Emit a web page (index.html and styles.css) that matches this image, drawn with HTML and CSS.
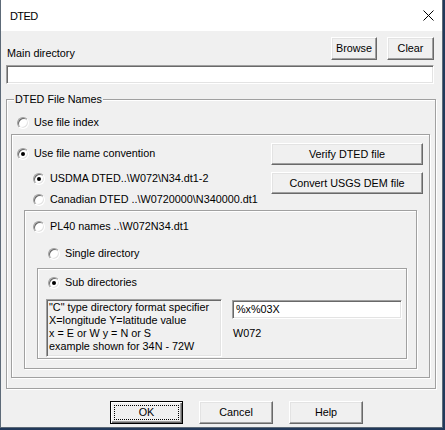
FILE: index.html
```html
<!DOCTYPE html>
<html>
<head>
<meta charset="utf-8">
<link rel="stylesheet" href="styles.css">
</head>
<body>
<div class="window">
  <div class="titlebar">
    <span class="title">DTED</span>
    <svg class="close" width="11" height="11" viewBox="0 0 11 11"><path d="M0.5 0.5 L10.5 10.5 M10.5 0.5 L0.5 10.5" stroke="#000" stroke-width="1" fill="none"/></svg>
  </div>
  <div class="client">
    <div class="toprow">
      <span class="lbl">Main directory</span>
      <div class="topbtns">
        <button class="btn b-browse">Browse</button>
        <button class="btn b-clear">Clear</button>
      </div>
    </div>
    <div class="edit main-edit"></div>

    <div class="group g0">
      <span class="legend">DTED File Names</span>
      <div class="radio-row r-index"><span class="radio"></span><span>Use file index</span></div>

      <div class="group g1">
        <div class="conv">
          <div class="conv-left">
            <div class="radio-row r-conv"><span class="radio on"></span><span>Use file name convention</span></div>
            <div class="radio-row r-usdma"><span class="radio on"></span><span>USDMA DTED..\W072\N34.dt1-2</span></div>
            <div class="radio-row r-can"><span class="radio"></span><span>Canadian DTED ..\W0720000\N340000.dt1</span></div>
          </div>
          <div class="conv-right">
            <button class="btn b-wide">Verify DTED file</button>
            <button class="btn b-wide b-convert">Convert USGS DEM file</button>
          </div>
        </div>

        <div class="group g2">
          <div class="radio-row r-pl40"><span class="radio"></span><span>PL40 names ..\W072N34.dt1</span></div>
          <div class="radio-row r-single"><span class="radio"></span><span>Single directory</span></div>

          <div class="group g3">
            <div class="radio-row r-sub"><span class="radio on"></span><span>Sub directories</span></div>
            <div class="fmt">
              <div class="static">"C" type directory format specifier<br>X=longitude Y=latitude value<br>x = E or W y = N or S<br>example shown for 34N - 72W</div>
              <div class="fmt-right">
                <div class="edit fmt-edit">%x%03X</div>
                <div class="example">W072</div>
              </div>
            </div>
          </div>
        </div>
      </div>
    </div>

    <div class="bottom">
      <button class="btn b-dlg b-ok"><span class="focus">OK</span></button>
      <button class="btn b-dlg">Cancel</button>
      <button class="btn b-dlg">Help</button>
    </div>
  </div>
</div>
</body>
</html>
```

FILE: styles.css
```css
html, body {
  margin: 0;
  padding: 0;
}
body {
  width: 445px;
  height: 430px;
  background: #22395a;
  font-family: "Liberation Sans", Arial, sans-serif;
  font-size: 10.8px;
  color: #000;
  overflow: hidden;
}
.window {
  box-sizing: border-box;
  width: 443px;
  height: 428px;
  background: #f0f0f0;
  border: 1px solid #5d6a78;
  border-top: none;
  display: flex;
  flex-direction: column;
}
.titlebar {
  height: 31px;
  background: #fff;
  display: flex;
  align-items: center;
  justify-content: space-between;
  padding: 0 8px 0 9px;
  flex-shrink: 0;
}
.title {
  font-size: 11px;
  letter-spacing: -0.6px;
}
.close {
  display: block;
}
.client {
  padding: 6px 0 0 5px;
  display: flex;
  flex-direction: column;
  align-items: flex-start;
}
.toprow {
  width: 428px;
  height: 23px;
  display: flex;
  justify-content: space-between;
  align-items: flex-end;
}
.lbl {
  line-height: 13px;
  margin-left: 1px;
  margin-bottom: 0;
}
.topbtns {
  display: flex;
  gap: 10px;
}
.btn {
  box-sizing: border-box;
  margin: 0;
  padding: 0;
  font-family: inherit;
  font-size: 10.8px;
  color: #000;
  background: #f0f0f0;
  border: 1px solid;
  border-color: #fff #696969 #696969 #fff;
  box-shadow: inset -1px -1px 0 #a0a0a0, inset 1px 1px 0 #e3e3e3;
  height: 23px;
  line-height: 13px;
  display: flex;
  align-items: center;
  justify-content: center;
}
.b-browse { width: 46px; }
.b-clear { width: 47px; }
.edit {
  box-sizing: border-box;
  background: #fff;
  border: 1px solid;
  border-color: #a0a0a0 #fff #fff #a0a0a0;
  box-shadow: inset 1px 1px 0 #696969, inset -1px -1px 0 #e3e3e3;
}
.main-edit {
  width: 428px;
  height: 19px;
  margin-top: 5px;
}
.group {
  box-sizing: border-box;
  position: relative;
  border: 1px solid #a0a0a0;
  box-shadow: 1px 1px 0 #fff, inset 1px 1px 0 #fff;
  display: flex;
  flex-direction: column;
  align-items: flex-start;
}
.legend {
  position: absolute;
  top: -8px;
  left: 7px;
  padding: 0 1px;
  line-height: 14px;
  background: #f0f0f0;
}
.g0 {
  width: 430px;
  height: 290px;
  margin-top: 15px;
}
.g1 {
  width: 419px;
  height: 244px;
  margin-top: 5px;
  margin-left: 4px;
}
.g2 {
  width: 393px;
  height: 159px;
  margin-top: 4px;
  margin-left: 12px;
}
.g3 {
  width: 370px;
  height: 91px;
  margin-top: 8px;
  margin-left: 12px;
}
.radio-row {
  display: flex;
  align-items: center;
  height: 13px;
  line-height: 13px;
  gap: 5px;
  white-space: nowrap;
}
.radio {
  box-sizing: border-box;
  position: relative;
  width: 12px;
  height: 12px;
  border-radius: 50%;
  background: #fff;
  border: 1px solid;
  border-color: #a0a0a0 #fff #fff #a0a0a0;
  box-shadow: inset 1px 1px 0 #696969, inset -1px -1px 0 #e3e3e3;
  flex-shrink: 0;
}
.radio.on::after {
  content: "";
  position: absolute;
  left: 3px;
  top: 3px;
  width: 4px;
  height: 4px;
  border-radius: 50%;
  background: #000;
}
.r-index { margin-top: 16px; margin-left: 10px; }
.conv {
  display: flex;
  width: 100%;
  align-items: flex-start;
}
.conv-left {
  display: flex;
  flex-direction: column;
  padding-top: 12px;
}
.r-conv { margin-left: 5px; }
.r-usdma { margin-left: 21px; margin-top: 12px; }
.r-can { margin-left: 21px; margin-top: 8px; }
.conv-right {
  margin-left: auto;
  margin-right: 6px;
  margin-top: 8px;
  display: flex;
  flex-direction: column;
  gap: 7px;
}
.b-wide {
  width: 152px;
  height: 22px;
}
.r-pl40 { margin-top: 9px; margin-left: 8px; }
.r-single { margin-top: 14px; margin-left: 23px; }
.r-sub { margin-top: 7px; margin-left: 10px; }
.fmt {
  display: flex;
  margin-top: 10px;
  margin-left: 8px;
}
.static {
  box-sizing: border-box;
  width: 176px;
  height: 58px;
  border: 1px solid;
  border-color: #a0a0a0 #fff #fff #a0a0a0;
  box-shadow: inset 1px 1px 0 #696969, inset -1px -1px 0 #e3e3e3;
  padding: 1px 0 0 2px;
  line-height: 13px;
  white-space: nowrap;
  overflow: hidden;
}
.fmt-right {
  margin-left: 10px;
  display: flex;
  flex-direction: column;
}
.fmt-edit {
  width: 170px;
  height: 19px;
  margin-top: 1px;
  padding-left: 3px;
  line-height: 17px;
}
.example {
  margin-top: 8px;
  margin-left: 1px;
  line-height: 13px;
}
.bottom {
  display: flex;
  gap: 16px;
  margin-top: 12px;
  margin-left: 104px;
}
.b-dlg {
  width: 74px;
  height: 23px;
}
.b-ok {
  width: 73px;
  position: relative;
  border: 1px solid #000;
  box-shadow: inset 1px 1px 0 #fff, inset -1px -1px 0 #696969, inset -2px -2px 0 #a0a0a0;
}
.b-ok .focus::before {
  content: "";
  position: absolute;
  left: 3px;
  top: 3px;
  right: 3px;
  bottom: 3px;
  border: 1px dotted #000;
}
```
